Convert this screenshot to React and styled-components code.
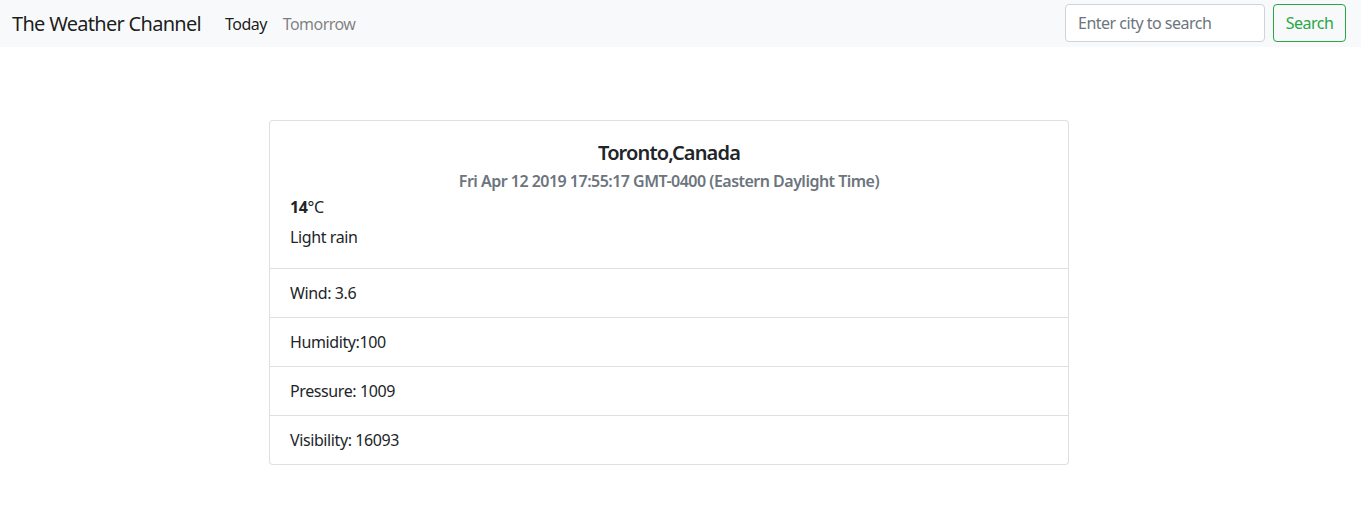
import styled, { createGlobalStyle } from 'styled-components';

const GlobalStyle = createGlobalStyle`
  * { box-sizing: border-box; }
  body {
    margin: 0;
    background: #fff;
    color: #212529;
    font-family: "Noto Sans", "Open Sans", sans-serif;
    font-size: 16px;
    line-height: 1.5;
  }
`;

const Navbar = styled.nav`
  display: flex;
  align-items: center;
  height: 47px;
  padding: 1px 15px 0 12px;
  background: #f8f9fa;
`;

const Brand = styled.a`
  font-size: 20px;
  color: rgba(0, 0, 0, 0.9);
  margin-right: 24px;
  white-space: nowrap;
  letter-spacing: -0.7px;
`;

const NavLinks = styled.div`
  display: flex;
  gap: 16px;
  flex: 1;
`;

const NavLink = styled.a`
  font-size: 16px;
  color: ${(p) => (p.$active ? 'rgba(0,0,0,0.9)' : 'rgba(0,0,0,0.5)')};
  letter-spacing: -0.55px;
`;

const SearchForm = styled.form`
  display: flex;
  align-items: center;
  gap: 8px;
  margin-top: -2px;
`;

const Input = styled.input`
  width: 200px;
  height: 38px;
  padding: 6px 12px;
  font: inherit;
  font-size: 16px;
  color: #495057;
  border: 1px solid #ced4da;
  border-radius: 4px;
  background: #fff;
  &::placeholder { color: #6c757d; letter-spacing: -0.5px; }
`;

const Button = styled.button`
  height: 38px;
  width: 73px;
  padding: 0;
  font: inherit;
  font-size: 16px;
  color: #28a745;
  border: 1px solid #28a745;
  border-radius: 4px;
  background: transparent;
  letter-spacing: -0.5px;
`;

const Main = styled.main`
  display: flex;
  justify-content: center;
  padding: 73px 23px 0 0;
`;

const Card = styled.div`
  width: 800px;
  border: 1px solid rgba(0, 0, 0, 0.125);
  border-radius: 4px;
  background: #fff;
`;

const CardBody = styled.div`
  padding: 20px 20px 19px;
`;

const Title = styled.h5`
  margin: 0;
  text-align: center;
  font-size: 20px;
  font-weight: 600;
  line-height: 24px;
  letter-spacing: -0.85px;
`;

const Subtitle = styled.h6`
  margin: 7px 0 0;
  text-align: center;
  font-size: 16px;
  font-weight: 600;
  line-height: 19px;
  color: #6c757d;
  letter-spacing: -0.52px;
`;

const Line = styled.div`
  margin-top: ${(p) => p.$gap}px;
  line-height: 24px;
  letter-spacing: -0.4px;
  b { font-weight: 700; }
`;

const ListItem = styled.div`
  padding: 12px 20px;
  line-height: 24px;
  border-top: 1px solid rgba(0, 0, 0, 0.125);
  letter-spacing: -0.4px;
`;

const details = [
  'Wind: 3.6',
  'Humidity:100',
  'Pressure: 1009',
  'Visibility: 16093',
];

export default function App() {
  return (
    <>
      <GlobalStyle />
      <Navbar>
        <Brand>The Weather Channel</Brand>
        <NavLinks>
          <NavLink $active>Today</NavLink>
          <NavLink>Tomorrow</NavLink>
        </NavLinks>
        <SearchForm onSubmit={(e) => e.preventDefault()}>
          <Input placeholder="Enter city to search" />
          <Button type="submit">Search</Button>
        </SearchForm>
      </Navbar>
      <Main>
        <Card>
          <CardBody>
            <Title>Toronto,Canada</Title>
            <Subtitle>Fri Apr 12 2019 17:55:17 GMT-0400 (Eastern Daylight Time)</Subtitle>
            <Line $gap={4}>
              <b>14</b>°C
            </Line>
            <Line $gap={6}>Light rain</Line>
          </CardBody>
          {details.map((d) => (
            <ListItem key={d}>{d}</ListItem>
          ))}
        </Card>
      </Main>
    </>
  );
}
